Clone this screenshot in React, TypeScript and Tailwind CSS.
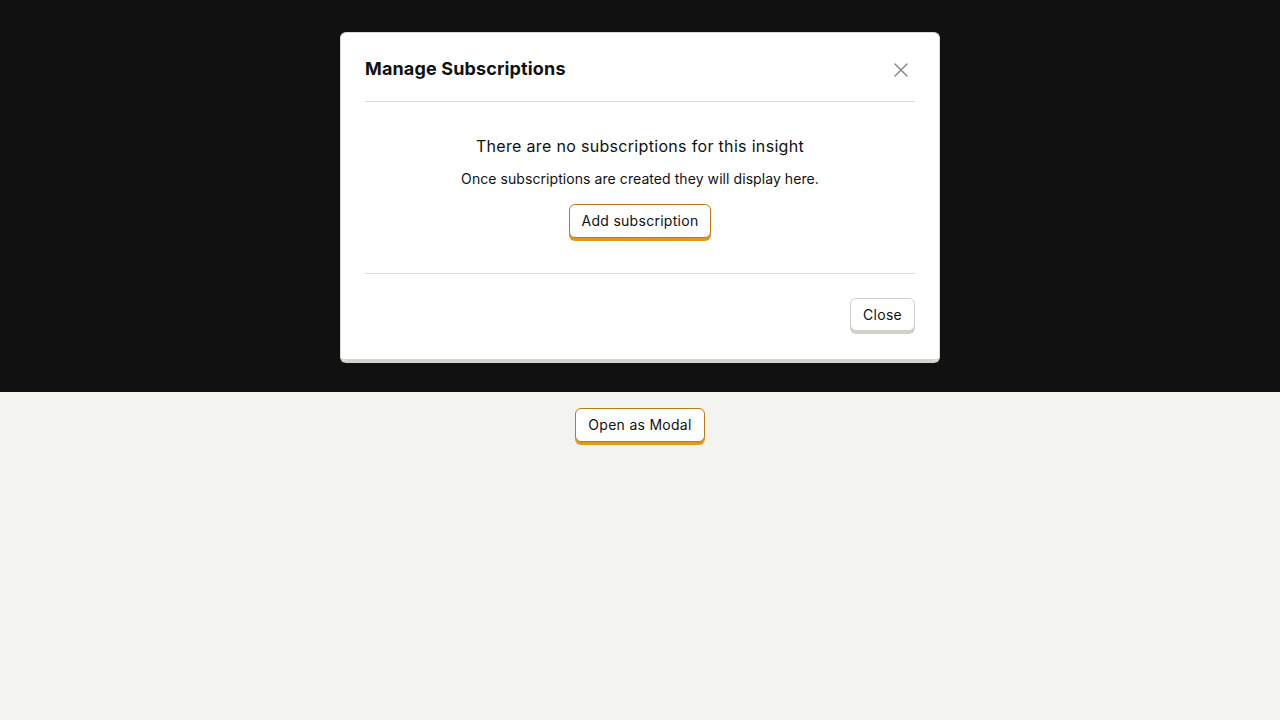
import { X } from "lucide-react";

function Btn({
  children,
  tone,
}: {
  children: React.ReactNode;
  tone: "primary" | "secondary";
}) {
  return (
    <button
      className={
        tone === "primary"
          ? "h-[34px] px-3 rounded-md bg-white border border-[#b57d17] shadow-[0_3px_0_0_#e0991d] text-sm font-normal tracking-[0.02em] text-[#111] leading-none"
          : "h-[33px] px-3 rounded-md bg-white border border-[#cfcfc8] shadow-[0_3px_0_0_#d2d2cb] text-sm font-normal tracking-[0.02em] text-[#111] leading-none"
      }
    >
      {children}
    </button>
  );
}

export default function App() {
  return (
    <div
      className="min-h-screen bg-[#f3f3ef] text-[#111]"
      style={{ fontFamily: "Inter, 'Noto Sans', sans-serif" }}
    >
      {/* DARK BAND WITH MODAL */}
      <div className="h-[392px] bg-[#111111] flex justify-center pt-8">
        <div className="w-[600px] h-[331px] bg-white rounded-md border border-[#dadad3] border-b-[4px] border-b-[#d4d4cc] px-6 flex flex-col">
          <div className="flex items-center justify-between pt-6 pb-5 border-b border-[#dcdcd6]">
            <h2 className="text-lg font-bold leading-6 tracking-[0.008em]">Manage Subscriptions</h2>
            <button className="w-6 h-6 flex items-center justify-center text-[#8a8a86] mr-[2px] translate-y-px">
              <X size={24} strokeWidth={1.5} />
            </button>
          </div>

          <div className="flex flex-col items-center pt-8 pb-[35px] border-b border-[#dcdcd6]">
            <h3 className="text-base font-normal leading-6 tracking-[0.02em]">
              There are no subscriptions for this insight
            </h3>
            <p className="text-sm leading-5 mt-[11px] tracking-[0.005em]">
              Once subscriptions are created they will display here.
            </p>
            <div className="mt-[15px]">
              <Btn tone="primary">Add subscription</Btn>
            </div>
          </div>

          <div className="flex justify-end pt-6">
            <Btn tone="secondary">Close</Btn>
          </div>
        </div>
      </div>

      {/* PAGE */}
      <div className="flex justify-center pt-4">
        <Btn tone="primary">Open as Modal</Btn>
      </div>
    </div>
  );
}
